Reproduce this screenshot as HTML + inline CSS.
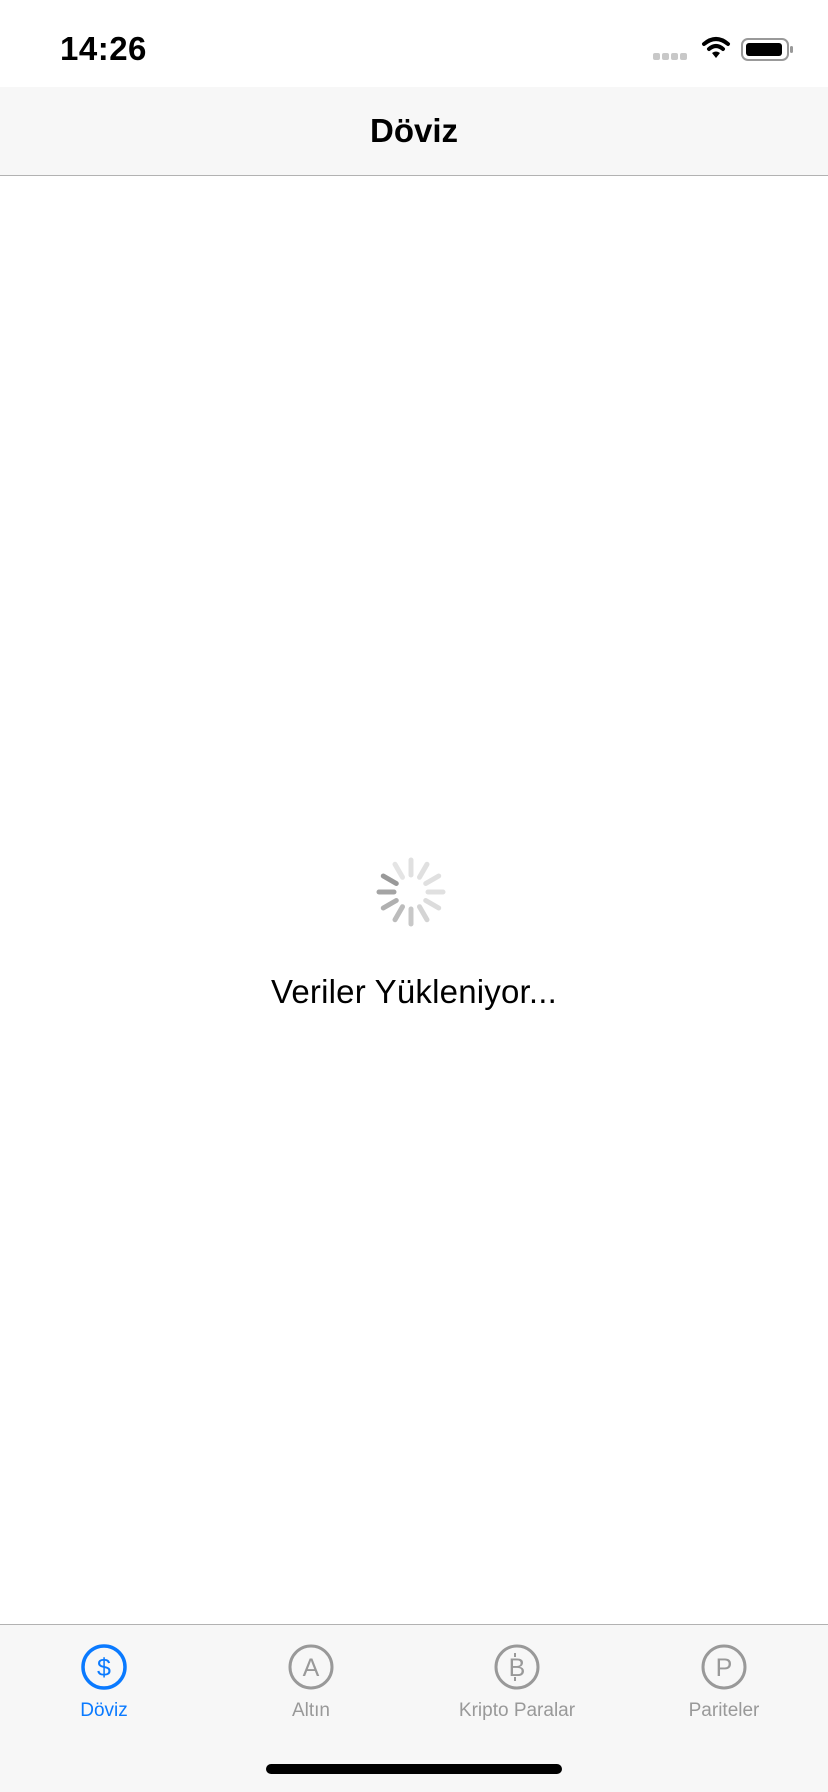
<!DOCTYPE html>
<html><head><meta charset="utf-8"><style>
body{margin:0;width:828px;height:1792px;background:#fff;position:relative;overflow:hidden;font-family:"Liberation Sans",sans-serif}
.a{position:absolute}
</style></head><body>
<div class="a" style="left:60px;top:30px;font-size:33px;font-weight:600;letter-spacing:0.5px">14:26</div>
<svg class="a" style="left:650px;top:34px" width="150" height="30">
<g fill="#c8c8c8"><rect x="3" y="19" width="7" height="7" rx="2"/><rect x="12" y="19" width="7" height="7" rx="2"/><rect x="21" y="19" width="7" height="7" rx="2"/><rect x="30" y="19" width="7" height="7" rx="2"/></g>
<g fill="none" stroke="#000" stroke-width="4" stroke-linecap="round"><path d="M54 10 Q66 0 78 10"/><path d="M59 15 Q66 9 73 15"/></g>
<path d="M62 19 L66 24 L70 19 Q66 16 62 19Z" fill="#000"/>
<rect x="92" y="5" width="46" height="21" rx="6" fill="none" stroke="#999" stroke-width="2"/>
<rect x="96" y="9" width="36" height="13" rx="3" fill="#000"/>
<rect x="140" y="12" width="3" height="7" rx="1.5" fill="#999"/>
</svg>
<div class="a" style="left:0;top:87px;width:828px;height:89px;background:#f7f7f7;border-bottom:1px solid #b2b2b2;box-sizing:border-box"></div>
<div class="a" style="left:0;top:112px;width:828px;text-align:center;font-size:33px;font-weight:600">Döviz</div>
<svg class="a" style="left:371px;top:852px" width="80" height="80" viewBox="-40 -40 80 80">
<g stroke-width="5" stroke-linecap="round">
<line x1="0" y1="-17" x2="0" y2="-32" stroke="#e0e0e0" transform="rotate(0)"/>
<line x1="0" y1="-17" x2="0" y2="-32" stroke="#e0e0e0" transform="rotate(30)"/>
<line x1="0" y1="-17" x2="0" y2="-32" stroke="#e0e0e0" transform="rotate(60)"/>
<line x1="0" y1="-17" x2="0" y2="-32" stroke="#e0e0e0" transform="rotate(90)"/>
<line x1="0" y1="-17" x2="0" y2="-32" stroke="#dcdcdc" transform="rotate(120)"/>
<line x1="0" y1="-17" x2="0" y2="-32" stroke="#d4d4d4" transform="rotate(150)"/>
<line x1="0" y1="-17" x2="0" y2="-32" stroke="#c8c8c8" transform="rotate(180)"/>
<line x1="0" y1="-17" x2="0" y2="-32" stroke="#bcbcbc" transform="rotate(210)"/>
<line x1="0" y1="-17" x2="0" y2="-32" stroke="#b0b0b0" transform="rotate(240)"/>
<line x1="0" y1="-17" x2="0" y2="-32" stroke="#a4a4a4" transform="rotate(270)"/>
<line x1="0" y1="-17" x2="0" y2="-32" stroke="#999" transform="rotate(300)"/>
<line x1="0" y1="-17" x2="0" y2="-32" stroke="#e4e4e4" transform="rotate(330)"/>
</g></svg>
<div class="a" style="left:0;top:973px;width:828px;text-align:center;font-size:33px;letter-spacing:0.2px">Veriler Yükleniyor...</div>
<div class="a" style="left:0;top:1624px;width:828px;height:168px;background:#f7f7f7;border-top:1px solid #b2b2b2;box-sizing:border-box"></div>
<svg class="a" style="left:0;top:1640px" width="828" height="60">
<g fill="none" stroke-width="3"><circle cx="104" cy="27" r="21" stroke="#0a7aff" stroke-width="3.5"/><circle cx="311" cy="27" r="21" stroke="#999"/><circle cx="517" cy="27" r="21" stroke="#999"/><circle cx="724" cy="27" r="21" stroke="#999"/></g>
<g font-family="Liberation Sans" font-size="25" text-anchor="middle"><text x="104" y="36" fill="#0a7aff">$</text><text x="311" y="36" fill="#999">A</text><text x="517" y="36" fill="#999">B</text><text x="724" y="36" fill="#999">P</text></g>
<g stroke="#999" stroke-width="2"><line x1="515" y1="13" x2="515" y2="17"/><line x1="515" y1="37" x2="515" y2="41"/></g>
</svg>
<div class="a" style="top:1700px;left:0;width:828px;font-size:19px;color:#999">
<span class="a" style="left:44px;width:120px;text-align:center;color:#0a7aff">Döviz</span>
<span class="a" style="left:251px;width:120px;text-align:center">Altın</span>
<span class="a" style="left:417px;width:200px;text-align:center">Kripto Paralar</span>
<span class="a" style="left:654px;width:140px;text-align:center">Pariteler</span>
</div>
<div class="a" style="left:266px;top:1764px;width:296px;height:10px;border-radius:5px;background:#000"></div>
</body></html>
